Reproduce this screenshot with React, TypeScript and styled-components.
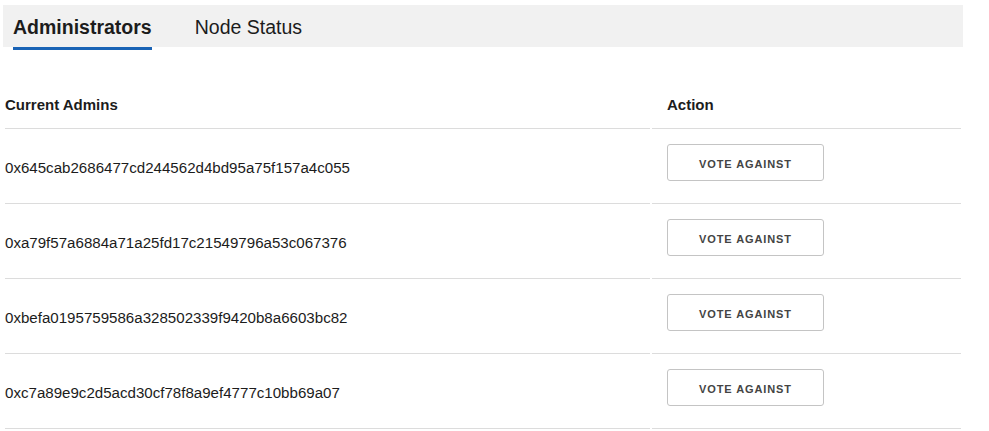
import React, { useState } from "react";
import styled, { createGlobalStyle } from "styled-components";

const GlobalStyle = createGlobalStyle`
  html, body { margin: 0; padding: 0; background: #ffffff; }
  body { font-family: "Liberation Sans", Arial, Helvetica, sans-serif; color: #1c1c1c; }
`;

const Page = styled.div`
  padding: 5px 0 0 3px;
  width: 986px;
  box-sizing: border-box;
`;

const TabBar = styled.div`
  display: flex;
  align-items: flex-start;
  gap: 43px;
  width: 960px;
  height: 42px;
  padding-left: 10px;
  box-sizing: border-box;
  background: #f1f1f1;
`;

const Tab = styled.button<{ $active: boolean }>`
  height: 40px;
  box-sizing: content-box;
  padding: 2px 0 0 0;
  margin: 0;
  border: none;
  border-bottom: 3px solid ${(p) => (p.$active ? "#1a63b5" : "transparent")};
  background: transparent;
  font-family: inherit;
  font-size: 19.5px;
  font-weight: ${(p) => (p.$active ? 700 : 400)};
  color: #1c1c1c;
  cursor: pointer;
  line-height: 40px;
`;

const Table = styled.div`
  display: grid;
  grid-template-columns: 645px 309px;
  column-gap: 2px;
  margin: 33px 0 0 2px;
`;

const HeadCell = styled.div<{ $pad: number }>`
  height: 49px;
  box-sizing: border-box;
  display: flex;
  align-items: center;
  padding-left: ${(p) => p.$pad}px;
  border-bottom: 1px solid #dcdcdc;
  font-size: 15px;
  font-weight: 700;
  color: #1c1c1c;
`;

const AddressCell = styled.div`
  height: 75px;
  box-sizing: border-box;
  padding-top: 29px;
  border-bottom: 1px solid #dcdcdc;
  font-size: 15.1px;
  line-height: 20px;
  color: #1c1c1c;
`;

const ActionCell = styled.div`
  height: 75px;
  box-sizing: border-box;
  padding: 15px 0 0 15px;
  border-bottom: 1px solid #dcdcdc;
`;

const VoteButton = styled.button`
  width: 157px;
  height: 37px;
  box-sizing: border-box;
  border: 1px solid #c4c4c4;
  border-radius: 3px;
  background: #ffffff;
  font-family: inherit;
  font-size: 11px;
  font-weight: 700;
  letter-spacing: 0.9px;
  color: #444444;
  cursor: pointer;
  padding: 2px 0 0 0;
`;

const admins = [
  "0x645cab2686477cd244562d4bd95a75f157a4c055",
  "0xa79f57a6884a71a25fd17c21549796a53c067376",
  "0xbefa0195759586a328502339f9420b8a6603bc82",
  "0xc7a89e9c2d5acd30cf78f8a9ef4777c10bb69a07",
];

export default function App() {
  const [tab, setTab] = useState(0);
  return (
    <Page>
      <GlobalStyle />
      <TabBar>
        <Tab $active={tab === 0} onClick={() => setTab(0)}>Administrators</Tab>
        <Tab $active={tab === 1} onClick={() => setTab(1)}>Node Status</Tab>
      </TabBar>
      <Table>
        <HeadCell $pad={0}>Current Admins</HeadCell>
        <HeadCell $pad={15}>Action</HeadCell>
        {admins.map((a) => (
          <React.Fragment key={a}>
            <AddressCell>{a}</AddressCell>
            <ActionCell>
              <VoteButton>VOTE AGAINST</VoteButton>
            </ActionCell>
          </React.Fragment>
        ))}
      </Table>
    </Page>
  );
}
